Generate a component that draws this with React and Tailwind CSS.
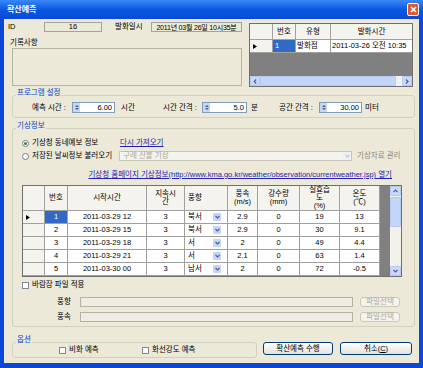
import React from 'react';

const rows = [
  ['1', '2011-03-29 12', '3', '북서', '2.9', '0', '19', '13'],
  ['2', '2011-03-29 15', '3', '북서', '2.9', '0', '30', '9.1'],
  ['3', '2011-03-29 18', '3', '서', '2', '0', '49', '4.4'],
  ['4', '2011-03-29 21', '3', '서', '2.1', '0', '63', '1.4'],
  ['5', '2011-03-30 00', '3', '남서', '2', '0', '72', '-0.5'],
];

const Chev = ({ dir }) => {
  const paths = {
    up: 'M0.5 3.2 L2.5 1.2 L4.5 3.2',
    down: 'M0.5 1 L2.5 3 L4.5 1',
    left: 'M3.2 0.5 L1.2 2.5 L3.2 4.5',
    right: 'M1 0.5 L3 2.5 L1 4.5',
  };
  const w = dir === 'up' || dir === 'down' ? 5 : 4;
  const h = dir === 'up' || dir === 'down' ? 4 : 5;
  return (
    <svg width={w} height={h} viewBox={`0 0 ${w} ${h}`}>
      <path d={paths[dir]} fill="none" stroke="#4d6185" strokeWidth="1.2" />
    </svg>
  );
};

const SbBtn = ({ dir, className }) => (
  <div className={`flex items-center justify-center rounded-[1px] border border-[#b4c8f1] bg-[#c9d8fb] ${className}`}>
    <Chev dir={dir} />
  </div>
);

const Arrow = () => (
  <svg width="4" height="5" viewBox="0 0 4 5">
    <path d="M0 0 L4 2.5 L0 5 Z" fill="#000" />
  </svg>
);

const Spin = ({ w, value }) => (
  <div className={`flex h-[11px] items-center border border-[#7f9db9] bg-white ${w}`}>
    <div className="flex h-full w-[7px] flex-col items-center justify-center gap-[1px] bg-[#c6d6f7]">
      <svg width="4" height="2" viewBox="0 0 4 2"><path d="M0 2 L2 0 L4 2 Z" fill="#4d6185" /></svg>
      <svg width="4" height="2" viewBox="0 0 4 2"><path d="M0 0 L2 2 L4 0 Z" fill="#4d6185" /></svg>
    </div>
    <span className="flex-1 pr-[2px] text-right leading-none">{value}</span>
  </div>
);

const Check = () => <span className="inline-block h-[7px] w-[7px] border border-[#7f8a96] bg-white" />;

const Group = ({ title, className, boxClass, children }) => (
  <div className={className}>
    <div className="relative z-10 ml-[4px] h-[8px] w-fit bg-[#ece9d8] px-[1px] leading-[8px] text-[#0046d5]">{title}</div>
    <div className={`-mt-[2px] rounded-[3px] border border-[#d0d0bf] ${boxClass}`}>{children}</div>
  </div>
);

const XpButton = ({ children, className, disabled }) => (
  <div
    className={`flex items-center justify-center rounded-[3px] border leading-none ${
      disabled
        ? 'border-[#c9c7ba] bg-[#f4f3ee] text-[#aca899]'
        : 'border-[#003c74] bg-linear-to-b from-white to-[#e3e2da] text-black'
    } ${className}`}
  >
    {children}
  </div>
);

export default function App() {
  return (
    <div className="flex h-[368px] w-[423px] flex-col bg-[#0c48d8] font-['Liberation_Sans','Noto_Sans_CJK_KR',sans-serif] text-[7.5px] text-black">
      {/* title bar */}
      <div className="flex h-[19px] items-center justify-between bg-linear-to-b from-[#3a88f5] via-[#0b57e3] to-[#0a4ad4] pl-[7px] pr-[4px]">
        <span className="text-[8px] font-bold text-white">확산예측</span>
        <div className="flex h-[13px] w-[12px] items-center justify-center rounded-[2px] border border-white bg-[#e0562f]">
          <svg width="7" height="7" viewBox="0 0 7 7">
            <path d="M1 1 L6 6 M6 1 L1 6" stroke="#fff" strokeWidth="1.6" />
          </svg>
        </div>
      </div>

      <div className="mx-[4px] mb-[5px] flex flex-1 flex-col bg-[#ece9d8] pl-[8px] pr-[4px]">
        {/* top */}
        <div className="flex pt-[3px]">
          <div className="flex w-[230px] flex-col">
            <div className="flex h-[10px] items-center">
              <span className="-ml-[4px] w-[36px]">ID</span>
              <div className="flex h-[10px] w-[58px] items-center justify-center border border-[#a5a397] bg-[#ece9d8] leading-none">16</div>
              <span className="ml-[13px] w-[36px]">발화일시</span>
              <div className="flex h-[10px] w-[91px] items-center justify-center overflow-hidden whitespace-nowrap border border-[#a5a397] bg-[#ece9d8] text-[7px] leading-none tracking-[-0.2px]">
                2011년 03월 26일 10시35분
              </div>
            </div>
            <div className="-ml-[2px] mt-[7px] h-[8px] leading-[8px]">기록사항</div>
            <div className="mt-[1px] h-[38px] border border-[#b5b2a4] bg-[#ece9d8]" />
          </div>

          <div className="ml-[7px] mt-[1px] flex h-[64px] w-[164px] flex-col border border-[#6f6f6f] bg-[#808080]">
            <div className="grid h-[16px] grid-cols-[23px_23px_35px_81px] bg-[#f4f3ee]">
              <div className="border-r border-b border-[#a0a0a0]" />
              <div className="flex items-center justify-center border-r border-b border-[#a0a0a0]">번호</div>
              <div className="flex items-center justify-center border-r border-b border-[#a0a0a0]">유형</div>
              <div className="flex items-center justify-center border-b border-[#a0a0a0]">발화시간</div>
            </div>
            <div className="grid h-[13px] grid-cols-[23px_23px_35px_81px] bg-white">
              <div className="flex items-center border-r border-b border-[#a0a0a0] bg-[#f4f3ee] pl-[3px]"><Arrow /></div>
              <div className="flex items-center border-r border-b border-[#a0a0a0] bg-[#316ac5] pl-[2px] text-white">1</div>
              <div className="flex items-center border-r border-b border-[#a0a0a0] pl-[1px]">발화점</div>
              <div className="flex items-center border-b border-[#a0a0a0] pl-[1px] whitespace-nowrap">2011-03-26 오전 10:35</div>
            </div>
            <div className="flex-1" />
            <div className="flex h-[10px] bg-[#f3f1ec]">
              <SbBtn dir="left" className="w-[10px]" />
              <div className="flex-1 rounded-[1px] border border-[#b4c8f1] bg-[#c4d5fa]" />
              <div className="w-[6px]" />
              <SbBtn dir="right" className="w-[10px]" />
            </div>
          </div>
        </div>

        {/* program settings */}
        <Group title="프로그램 설정" className="mt-[2px]" boxClass="flex pt-[6px] pb-[4px] pl-[19px]">
          <div className="flex h-[11px] items-center">
            <span className="w-[40px]">예측 시간 :</span>
            <Spin w="w-[43px]" value="6.00" />
            <span className="ml-[6px] w-[42px]">시간</span>
            <span className="w-[39px]">시간 간격 :</span>
            <Spin w="w-[45px]" value="5.0" />
            <span className="ml-[4px] w-[28px]">분</span>
            <span className="w-[40px]">공간 간격 :</span>
            <Spin w="w-[43px]" value="30.00" />
            <span className="ml-[3px]">미터</span>
          </div>
        </Group>

        {/* weather info */}
        <Group title="기상정보" className="mt-[4px]" boxClass="flex flex-col pb-[4px]">
          <div className="mt-[9px] flex h-[10px] items-center pl-[9px]">
            <span className="flex h-[7px] w-[7px] items-center justify-center rounded-full border border-[#6e7c8c] bg-white">
              <span className="h-[3px] w-[3px] rounded-full bg-[#2c8a2c]" />
            </span>
            <span className="ml-[3px] w-[88px]">기상청 동네예보 정보</span>
            <span className="text-[#2323b5] underline">다시 가져오기</span>
          </div>
          <div className="mt-[3px] flex h-[10px] items-center pl-[9px]">
            <span className="h-[7px] w-[7px] rounded-full border border-[#6e7c8c] bg-white" />
            <span className="ml-[3px] w-[87px]">저장된 날씨정보 불러오기</span>
            <div className="flex h-[10px] w-[233px] items-center border border-[#c9c7ba] bg-[#f4f3ee] pl-[3px] text-[#aca899]">
              <span className="flex-1">구례 산불 기상</span>
              <div className="flex h-[8px] w-[8px] items-center justify-center bg-[#eef0f4]">
                <svg width="5" height="4" viewBox="0 0 5 4"><path d="M0.5 1 L2.5 3 L4.5 1" fill="none" stroke="#c2c7d2" strokeWidth="1.2" /></svg>
              </div>
            </div>
            <span className="ml-[5px] text-[#8a887c]">기상자료 관리</span>
          </div>
          <div className="mt-[10px] flex h-[8px] items-center justify-end pr-[22px] leading-[8px]">
            <span className="whitespace-nowrap text-[#2323b5] underline">
              기상청 홈페이지 기상정보(http://www.kma.go.kr/weather/observation/currentweather.jsp) 열기
            </span>
          </div>

          {/* data grid */}
          <div className="ml-[9px] mt-[6px] flex h-[92px] w-[380px] border border-[#6f6f6f] bg-[#808080]">
            <div className="flex flex-col bg-white">
              <div className="grid h-[25px] grid-cols-[22px_23px_79px_38px_43px_30px_42px_40px_40px] bg-[#f4f3ee] text-center leading-[8px]">
                <div className="border-r border-b border-[#a0a0a0]" />
                <div className="flex items-center justify-center border-r border-b border-[#a0a0a0]">번호</div>
                <div className="flex items-center justify-center border-r border-b border-[#a0a0a0]">시작시간</div>
                <div className="flex items-center justify-center border-r border-b border-[#a0a0a0]">지속시<br />간</div>
                <div className="flex items-center border-r border-b border-[#a0a0a0] pl-[3px]">풍향</div>
                <div className="flex items-center justify-center border-r border-b border-[#a0a0a0]">풍속<br />(m/s)</div>
                <div className="flex items-center justify-center border-r border-b border-[#a0a0a0]">강수량<br />(mm)</div>
                <div className="flex items-center justify-center border-r border-b border-[#a0a0a0]">실효습<br />도<br />(%)</div>
                <div className="flex items-center justify-center border-r border-b border-[#a0a0a0]">온도<br />(℃)</div>
              </div>
              {rows.map((r, i) => (
                <div key={i} className="grid h-[13px] grid-cols-[22px_23px_79px_38px_43px_30px_42px_40px_40px] text-center">
                  <div className="flex items-center border-r border-b border-[#a0a0a0] bg-[#f4f3ee] pl-[3px]">{i === 0 && <Arrow />}</div>
                  <div className={`flex items-center justify-center border-r border-b border-[#a0a0a0] ${i === 0 ? 'bg-[#316ac5] text-white' : ''}`}>{r[0]}</div>
                  <div className="flex items-center justify-center border-r border-b border-[#a0a0a0]">{r[1]}</div>
                  <div className="flex items-center justify-center border-r border-b border-[#a0a0a0]">{r[2]}</div>
                  <div className="flex items-center border-r border-b border-[#a0a0a0] pl-[3px] pr-[6px]">
                    <span className="flex-1 text-left">{r[3]}</span>
                    <div className="flex h-[8px] w-[8px] items-center justify-center rounded-[1px] bg-[#c4d5fa]">
                      <Chev dir="down" />
                    </div>
                  </div>
                  <div className="flex items-center justify-center border-r border-b border-[#a0a0a0]">{r[4]}</div>
                  <div className="flex items-center justify-center border-r border-b border-[#a0a0a0]">{r[5]}</div>
                  <div className="flex items-center justify-center border-r border-b border-[#a0a0a0]">{r[6]}</div>
                  <div className="flex items-center justify-center border-r border-b border-[#a0a0a0]">{r[7]}</div>
                </div>
              ))}
            </div>
            <div className="flex-1" />
            <div className="flex w-[11px] flex-col bg-[#f3f1ec]">
              <SbBtn dir="up" className="h-[10px]" />
              <div className="mt-[1px] h-[30px] rounded-[1px] border border-[#b4c8f1] bg-[#c4d5fa]" />
              <div className="flex-1" />
              <SbBtn dir="down" className="h-[10px]" />
            </div>
          </div>

          <div className="mt-[4px] flex h-[8px] items-center pl-[9px]">
            <Check />
            <span className="ml-[3px]">바람장 파일 적용</span>
          </div>
          <div className="mt-[8px] flex h-[10px] items-center pl-[44px]">
            <span className="w-[23px]">풍향</span>
            <div className="h-[10px] w-[273px] border border-[#b5b2a4] bg-[#efede3]" />
            <XpButton disabled className="ml-[7px] h-[10px] w-[40px]">파일선택</XpButton>
          </div>
          <div className="mt-[5px] flex h-[10px] items-center pl-[44px]">
            <span className="w-[23px]">풍속</span>
            <div className="h-[10px] w-[273px] border border-[#b5b2a4] bg-[#efede3]" />
            <XpButton disabled className="ml-[7px] h-[10px] w-[40px]">파일선택</XpButton>
          </div>
        </Group>

        {/* options + buttons */}
        <div className="mt-[9px] flex">
          <Group title="옵션" className="w-[245px]" boxClass="flex h-[16px] items-center pl-[46px]">
            <Check />
            <span className="ml-[3px] w-[73px]">비화 예측</span>
            <Check />
            <span className="ml-[3px]">화선강도 예측</span>
          </Group>
          <XpButton className="ml-[6px] mt-[6px] h-[13px] w-[70px]">확산예측 수행</XpButton>
          <XpButton className="ml-[7px] mt-[6px] h-[13px] w-[72px]">취소(<span className="underline">C</span>)</XpButton>
        </div>
      </div>
    </div>
  );
}
